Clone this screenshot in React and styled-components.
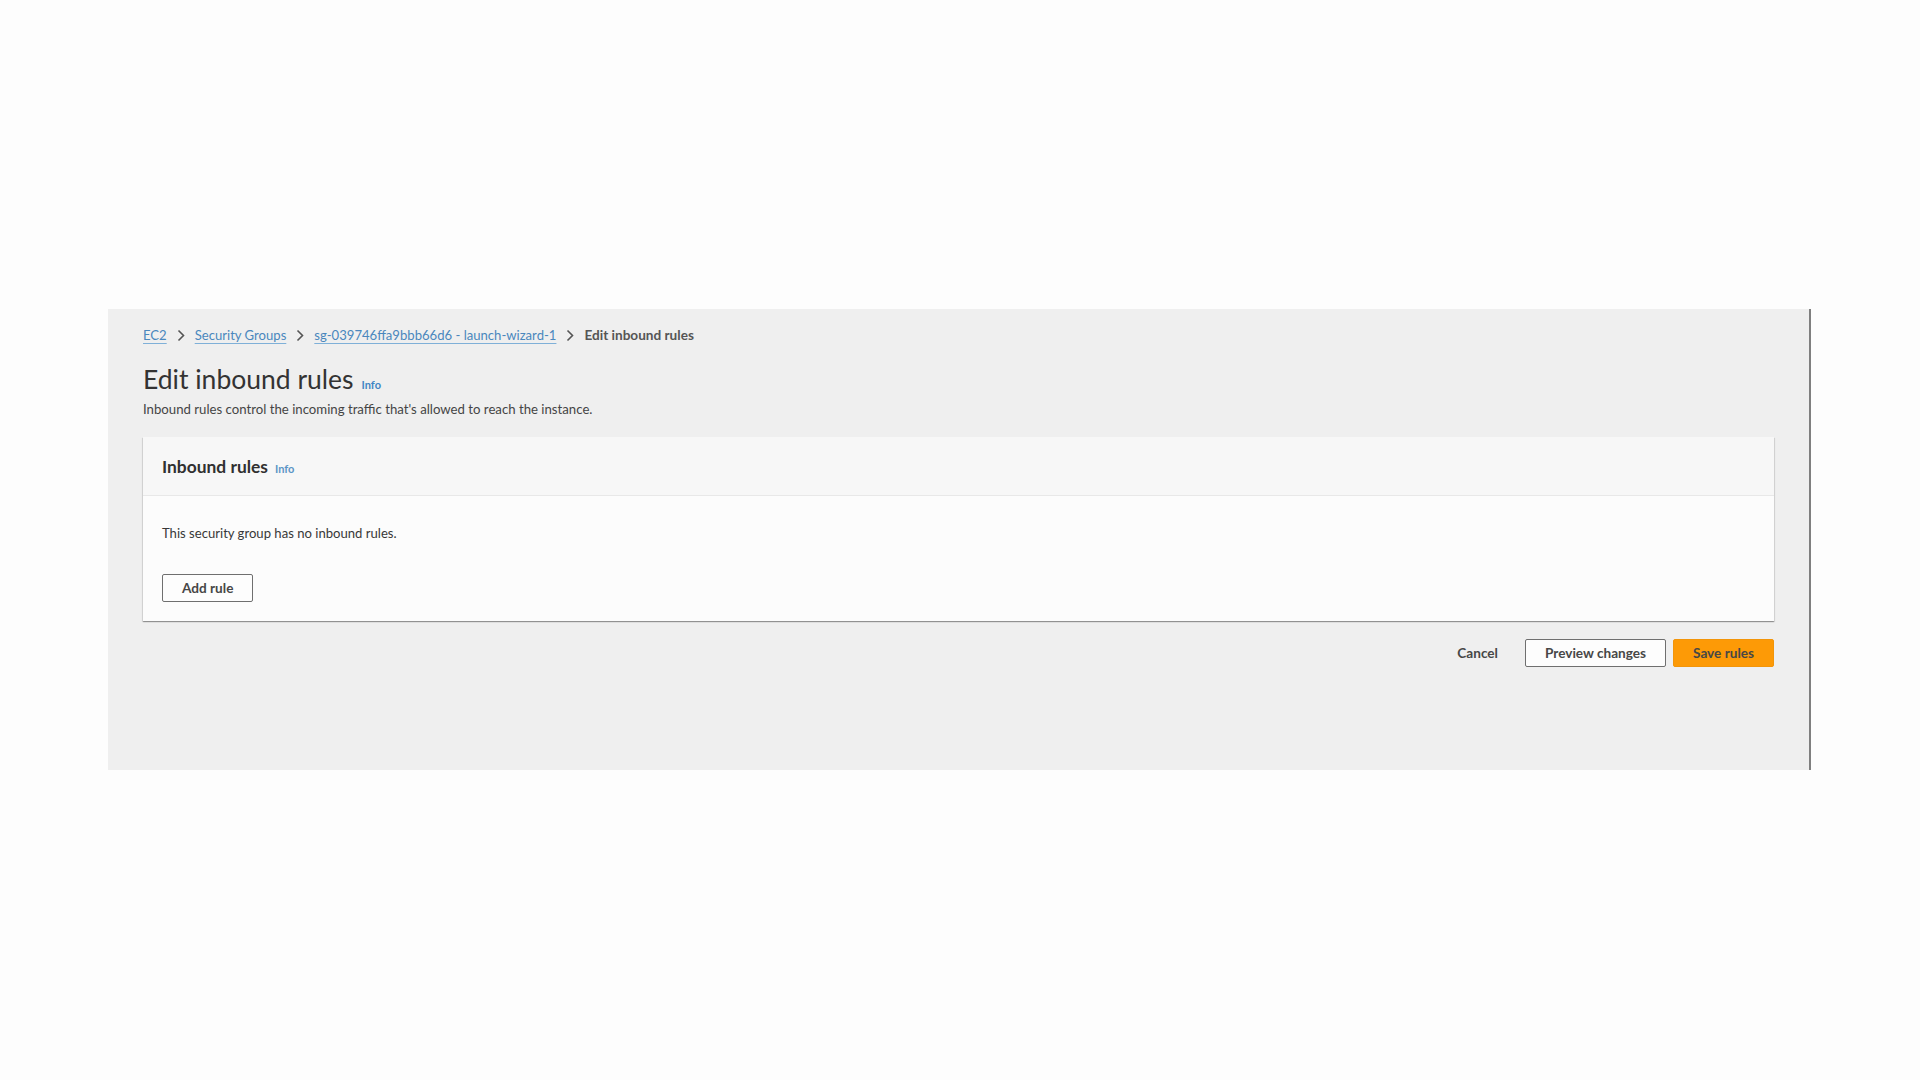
import React from "react";
import styled, { createGlobalStyle } from "styled-components";

const Global = createGlobalStyle`
  html, body { margin: 0; padding: 0; background: #fdfdfd; }
  body { font-family: Lato, "Liberation Sans", Arial, sans-serif; color: #444; }
  * { box-sizing: border-box; }
`;

const Page = styled.div`
  min-height: 1080px;
  padding: 309px 0 0 108px;
  background: #fdfdfd;
`;

const Panel = styled.main`
  width: 1703px;
  height: 461px;
  background: #efefef;
  border-right: 2px solid #7f7f7f;
  padding: 16px 35px 0 35px;
  display: flex;
  flex-direction: column;
`;

const Crumbs = styled.nav`
  display: flex;
  align-items: center;
  gap: 10px;
  height: 20px;
  font-size: 13.1px;
`;

const CrumbLink = styled.a`
  color: #4a87bd;
  text-decoration: underline;
  text-underline-offset: 3px;
  text-decoration-color: #7fb0d8;
  cursor: pointer;
`;

const CrumbCurrent = styled.span`
  color: #555;
  font-weight: 700;
  font-size: 13.6px;
`;

const Chevron = () => (
  <svg width="8" height="13" viewBox="0 0 8 13" aria-hidden="true">
    <polyline points="1.5,1.5 6.5,6.5 1.5,11.5" fill="none" stroke="#555" strokeWidth="1.6" />
  </svg>
);

const TitleRow = styled.div`
  display: flex;
  align-items: baseline;
  gap: 8px;
  margin-top: 18px;
`;

const H1 = styled.h1`
  margin: 0;
  font-size: 26.5px;
  font-weight: 400;
  line-height: 32px;
  color: #333;
`;

const Info = styled.a`
  color: ${(p) => (p.$light ? "#5b95c6" : "#3f86c4")};
  font-size: 11px;
  font-weight: 700;
  cursor: pointer;
`;

const Desc = styled.p`
  margin: 5px 0 0;
  font-size: 13.2px;
  line-height: 18px;
  color: #454545;
`;

const Card = styled.section`
  margin-top: 19px;
  background: #fcfcfc;
  box-shadow: 0 1px 1px rgba(0, 0, 0, 0.28), 1px 1px 1px rgba(0, 0, 0, 0.08),
    -1px 1px 1px rgba(0, 0, 0, 0.08);
`;

const CardHeader = styled.header`
  height: 59px;
  padding: 0 19px;
  display: flex;
  align-items: center;
  background: #f7f7f7;
  border-bottom: 1px solid #e8e8e8;
`;

const HeadingLine = styled.div`
  display: flex;
  align-items: baseline;
  gap: 7px;
`;

const H2 = styled.h2`
  margin: 0;
  font-size: 17.4px;
  font-weight: 700;
  color: #303030;
`;

const CardBody = styled.div`
  padding: 28px 19px 19px;
  display: flex;
  flex-direction: column;
  align-items: flex-start;
  gap: 32px;
`;

const Note = styled.p`
  margin: 0;
  font-size: 13.1px;
  line-height: 18px;
  color: #383838;
`;

const Button = styled.button`
  height: 28px;
  padding: 0 ${(p) => (p.$variant === "link" ? "19px" : "19px")};
  font-family: inherit;
  font-size: 13.6px;
  font-weight: 700;
  color: #474747;
  border-radius: 2px;
  cursor: pointer;
  background: ${(p) => (p.$variant === "primary" ? "#fd9a06" : p.$variant === "link" ? "transparent" : "#fdfdfd")};
  border: 1px solid
    ${(p) => (p.$variant === "primary" ? "#f2950a" : p.$variant === "link" ? "transparent" : "#6f6f6f")};
`;

const Actions = styled.div`
  display: flex;
  justify-content: flex-end;
  gap: 7px;
  margin-top: 18px;
`;

export default function App() {
  return (
    <>
      <Global />
      <Page>
        <Panel>
          <Crumbs>
            <CrumbLink>EC2</CrumbLink>
            <Chevron />
            <CrumbLink>Security Groups</CrumbLink>
            <Chevron />
            <CrumbLink>sg-039746ffa9bbb66d6 - launch-wizard-1</CrumbLink>
            <Chevron />
            <CrumbCurrent>Edit inbound rules</CrumbCurrent>
          </Crumbs>
          <TitleRow>
            <H1>Edit inbound rules</H1>
            <Info>Info</Info>
          </TitleRow>
          <Desc>Inbound rules control the incoming traffic that's allowed to reach the instance.</Desc>
          <Card>
            <CardHeader>
              <HeadingLine>
                <H2>Inbound rules</H2>
                <Info $light>Info</Info>
              </HeadingLine>
            </CardHeader>
            <CardBody>
              <Note>This security group has no inbound rules.</Note>
              <Button>Add rule</Button>
            </CardBody>
          </Card>
          <Actions>
            <Button $variant="link">Cancel</Button>
            <Button>Preview changes</Button>
            <Button $variant="primary">Save rules</Button>
          </Actions>
        </Panel>
      </Page>
    </>
  );
}
